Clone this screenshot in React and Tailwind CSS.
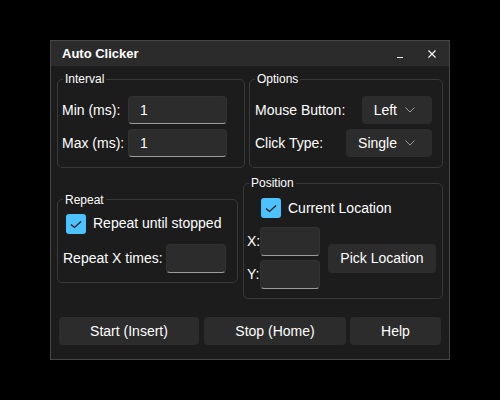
const font = { fontFamily: '"Liberation Sans", Arial, sans-serif' };

const Group = ({ title, className = "", children }) => (
  <fieldset className={`border border-[#393939] rounded-[5px] ${className}`}>
    <legend className="ml-[5px] px-[2px] text-[12px] leading-[14px] text-white">{title}</legend>
    {children}
  </fieldset>
);

const Field = ({ value = "", className = "" }) => (
  <div
    className={`flex items-center rounded-[4px] bg-[#2c2c2c] border border-[#313131] border-b-[#9c9c9c] pl-[11px] text-[14px] text-white ${className}`}
  >
    {value}
  </div>
);

const Chevron = () => (
  <svg width="10" height="6" viewBox="0 0 10 6" fill="none">
    <polyline points="0.5,0.5 5,5 9.5,0.5" stroke="#9a9a9a" strokeWidth="1" />
  </svg>
);

const Dropdown = ({ value }) => (
  <div className="flex items-center gap-[8px] h-[28px] rounded-[4px] bg-[#2c2c2c] pl-[12px] pr-[17px] text-[14px] text-white">
    <span>{value}</span>
    <Chevron />
  </div>
);

const Check = ({ label }) => (
  <div className="flex items-center gap-[7px] h-[20px] text-[14px] text-white">
    <div className="w-[20px] h-[20px] rounded-[3px] bg-[#4cc2ff] flex items-center justify-center">
      <svg width="20" height="20" viewBox="0 0 20 20" fill="none">
        <polyline points="5,10.5 8.5,13.5 15,7.5" stroke="#1b1b1b" strokeWidth="1.3" />
      </svg>
    </div>
    <span>{label}</span>
  </div>
);

const Btn = ({ children, className = "" }) => (
  <div
    className={`flex items-center justify-center rounded-[4px] bg-[#2c2c2c] text-[14px] text-white ${className}`}
  >
    {children}
  </div>
);

export default function App() {
  return (
    <div className="w-[500px] h-[400px] bg-black pt-[40px] pl-[50px]" style={font}>
      <div className="w-[400px] h-[320px] border border-[#464646] bg-[#1c1c1c] flex flex-col">
        {/* title bar */}
        <div className="h-[25px] bg-[#2b2b2b] flex items-center pl-[11px] pr-[13px]">
          <span className="text-[13px] font-bold text-white">Auto Clicker</span>
          <div className="ml-auto h-[8px] w-[6px] flex items-end">
            <div className="h-px w-[6px] bg-[#e8e8e8]" />
          </div>
          <svg className="ml-[25px]" width="8" height="8" viewBox="0 0 8 8">
            <path d="M0.5 0.5 L7.5 7.5 M7.5 0.5 L0.5 7.5" stroke="#ffffff" strokeWidth="1.1" />
          </svg>
        </div>

        <div className="px-[6px]">
          {/* row 1 */}
          <div className="flex gap-[4px] mt-[6px]">
            <Group title="Interval" className="w-[188px] h-[96px]">
              <div className="pt-[10px] pl-[4px] flex flex-col gap-[5px] text-[14px] text-white">
                <div className="flex items-center h-[28px]">
                  <span className="w-[66px]">Min (ms):</span>
                  <Field value="1" className="w-[99px] h-[28px]" />
                </div>
                <div className="flex items-center h-[28px]">
                  <span className="w-[66px]">Max (ms):</span>
                  <Field value="1" className="w-[99px] h-[28px]" />
                </div>
              </div>
            </Group>
            <Group title="Options" className="w-[194px] h-[96px]">
              <div className="pt-[10px] pl-[5px] pr-[10px] flex flex-col gap-[5px] text-[14px] text-white">
                <div className="flex items-center justify-between h-[28px]">
                  <span>Mouse Button:</span>
                  <Dropdown value="Left" />
                </div>
                <div className="flex items-center justify-between h-[28px]">
                  <span>Click Type:</span>
                  <Dropdown value="Single" />
                </div>
              </div>
            </Group>
          </div>

          {/* row 2 */}
          <div className="flex items-center gap-[5px] mt-[8px] h-[123px]">
            <Group title="Repeat" className="w-[181px] h-[90px]">
              <div className="pt-[7px] flex flex-col gap-[10px]">
                <div className="pl-[8px]">
                  <Check label="Repeat until stopped" />
                </div>
                <div className="flex items-center h-[29px] pl-[5px] text-[14px] text-white">
                  <span className="w-[103px]">Repeat X times:</span>
                  <Field className="w-[60px] h-[29px]" />
                </div>
              </div>
            </Group>
            <Group title="Position" className="w-[200px] h-[123px]">
              <div className="pt-[8px] flex flex-col gap-[9px]">
                <div className="pl-[17px]">
                  <Check label="Current Location" />
                </div>
                <div className="flex items-center pl-[3px] text-[14px] text-white">
                  <div className="flex flex-col gap-[4px]">
                    <div className="flex items-center h-[29px]">
                      <span className="w-[13px]">X:</span>
                      <Field className="w-[60px] h-[29px]" />
                    </div>
                    <div className="flex items-center h-[29px]">
                      <span className="w-[13px]">Y:</span>
                      <Field className="w-[60px] h-[29px]" />
                    </div>
                  </div>
                  <Btn className="ml-[8px] w-[108px] h-[29px]">Pick Location</Btn>
                </div>
              </div>
            </Group>
          </div>
        </div>

        {/* bottom buttons */}
        <div className="flex mt-[18px] px-[8px]">
          <Btn className="w-[140px] h-[28px]">Start (Insert)</Btn>
          <Btn className="ml-[5px] w-[142px] h-[28px]">Stop (Home)</Btn>
          <Btn className="ml-[4px] w-[91px] h-[28px]">Help</Btn>
        </div>
      </div>
    </div>
  );
}
